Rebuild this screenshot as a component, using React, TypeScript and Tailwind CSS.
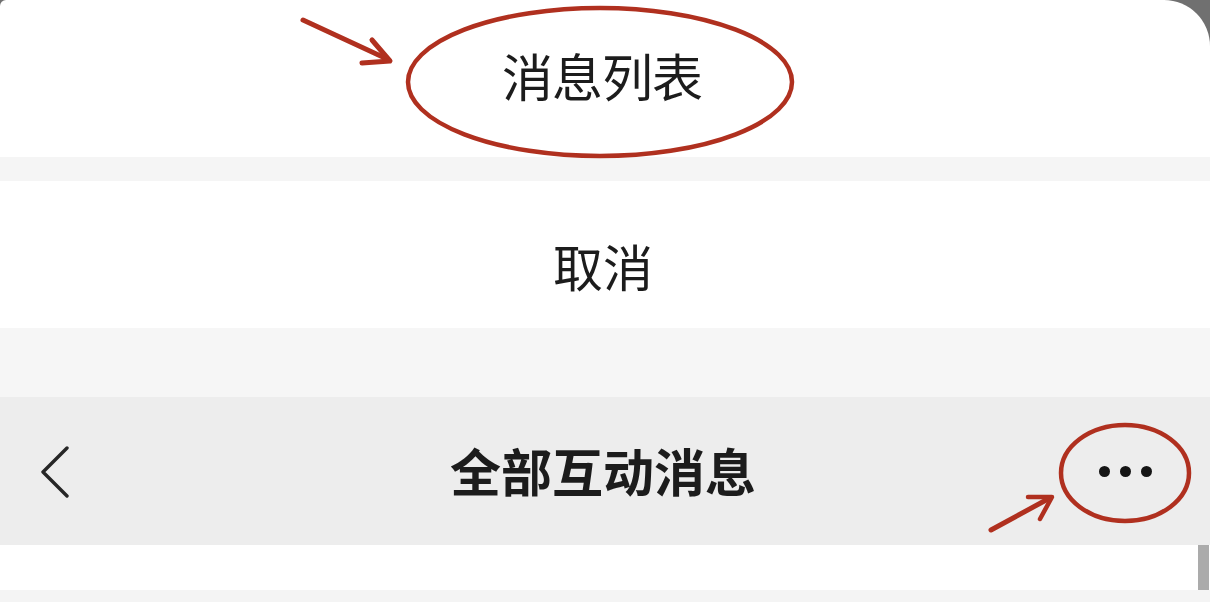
import React from "react";

const FONT = { fontFamily: '"Noto Sans CJK SC", "Noto Sans", sans-serif' };

export default function App() {
  return (
    <div
      className="relative w-[1210px] h-[602px] overflow-hidden bg-[#707070] text-[#1c1c1c]"
      style={FONT}
    >
      <div className="flex flex-col h-full">
        <div className="h-[157px] bg-white rounded-tr-[46px] rounded-tl-[6px] flex items-center justify-center">
          <span className="text-[51px] leading-none pb-[6px] pr-[6px] tracking-[-1px]">消息列表</span>
        </div>
        <div className="h-[24px] bg-[#f5f5f5]" />
        <div className="h-[147px] bg-white flex items-center justify-center">
          <span className="text-[50px] leading-none pt-[20px] pr-[4px]">取消</span>
        </div>
        <div className="h-[69px] bg-[#f6f6f6]" />
        <div className="h-[148px] bg-[#ededed] flex items-center">
          <div className="w-[220px] pl-[38px] flex items-center">
            <svg width="34" height="54" viewBox="0 0 34 54" fill="none">
              <path
                d="M29 4 L5 28 L29 52"
                stroke="#262626"
                strokeWidth="3.4"
                strokeLinecap="round"
                strokeLinejoin="round"
              />
            </svg>
          </div>
          <div className="flex-1 text-center">
            <span className="text-[51px] leading-none font-bold pr-[4px]">全部互动消息</span>
          </div>
          <div className="w-[220px] flex items-center justify-end pr-[58px] gap-[10px]">
            <span className="w-[11px] h-[11px] rounded-full bg-[#151515]" />
            <span className="w-[11px] h-[11px] rounded-full bg-[#151515]" />
            <span className="w-[11px] h-[11px] rounded-full bg-[#151515]" />
          </div>
        </div>
        <div className="h-[45px] bg-white flex justify-end">
          <div className="w-[11px] mr-[1px] bg-[#ababab]" />
        </div>
        <div className="flex-1 bg-[#f4f4f4]" />
      </div>

      <svg
        className="absolute inset-0 pointer-events-none"
        width="1210"
        height="602"
        viewBox="0 0 1210 602"
        fill="none"
      >
        <ellipse cx="600" cy="82" rx="192" ry="74" stroke="#b0301f" strokeWidth="4.5" />
        <path d="M303 20 L385 58" stroke="#b0301f" strokeWidth="5" strokeLinecap="round" />
        <path d="M372 40 L390 61 L362 63" stroke="#b0301f" strokeWidth="5" strokeLinecap="round" strokeLinejoin="round" />
        <ellipse cx="1125" cy="473" rx="64" ry="48" stroke="#b0301f" strokeWidth="4.5" />
        <path d="M991 530 L1048 499" stroke="#b0301f" strokeWidth="5" strokeLinecap="round" />
        <path d="M1028 497 L1052 497 L1040 519" stroke="#b0301f" strokeWidth="4.5" strokeLinecap="round" strokeLinejoin="round" />
      </svg>
    </div>
  );
}
